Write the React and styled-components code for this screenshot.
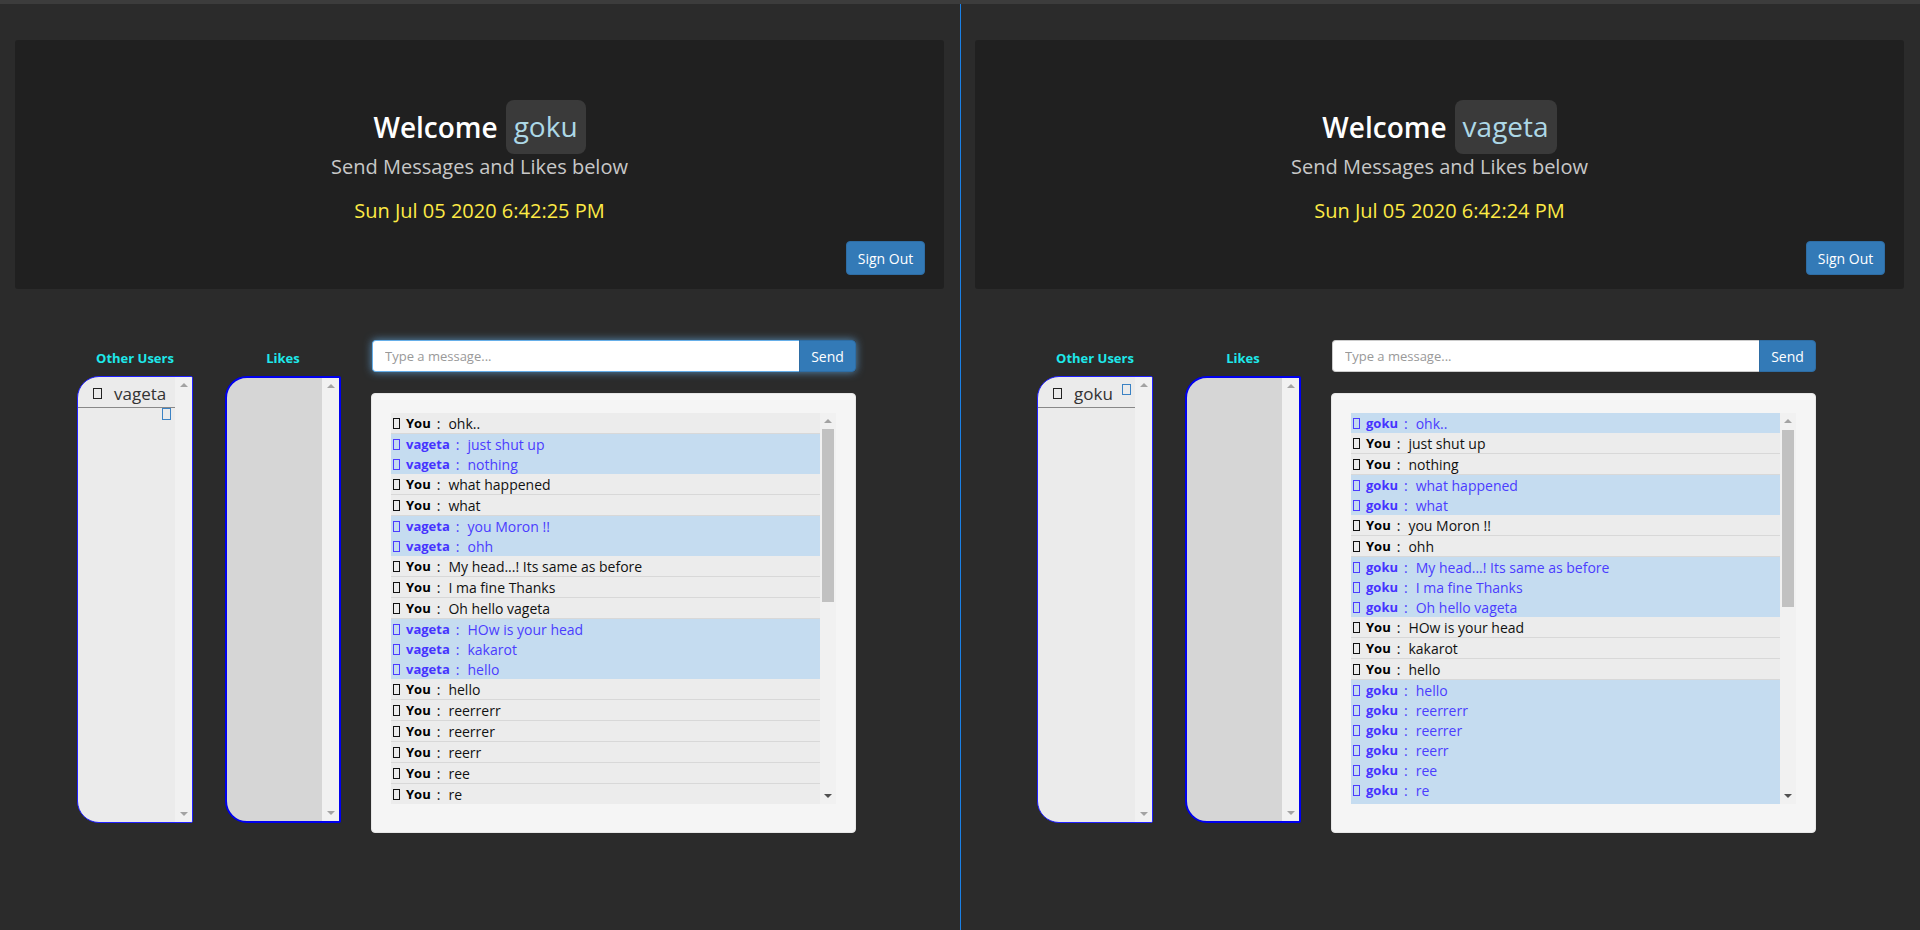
import React from 'react'
import styled, { createGlobalStyle, css } from 'styled-components'

const GlobalStyle = createGlobalStyle`
    html, body {
        margin: 0;
        padding: 0;
        background: #2b2b2b;
    }
    * {
        box-sizing: border-box;
    }
`

const comic = `"Comic Sans MS", "Open Sans", sans-serif`
const segoe = `"Segoe UI", "Open Sans", sans-serif`

const Screen = styled.div`
    display: flex;
    flex-direction: column;
    width: 1920px;
    height: 930px;
    overflow: hidden;
    background: #2b2b2b;
`
const TopBar = styled.div`
    height: 4px;
    background: #3c3c3c;
`
const Panes = styled.div`
    display: flex;
    flex: 1;
`
const Divider = styled.div`
    width: 1px;
    background: #1a80e6;
`
const PaneBox = styled.div`
    width: ${props => props.$width}px;
    display: flex;
    flex-direction: column;
    padding: 36px 16px 0 ${props => props.$left}px;
`

const Header = styled.header`
    height: 249px;
    background: #202020;
    border-radius: 3px;
    display: flex;
    flex-direction: column;
    align-items: center;
    padding-top: 60px;
    font-family: ${comic};
`
const TitleRow = styled.div`
    display: flex;
    align-items: center;
    gap: 8px;
    font-size: 28px;
    font-weight: 600;
    color: #ffffff;
    height: 54px;
`
const NameBadge = styled.span`
    display: inline-block;
    height: 54px;
    line-height: 52px;
    padding: 0 8px;
    border-radius: 8px;
    background: #3a3a3a;
    color: #add8e6;
    font-weight: 400;
`
const Subtitle = styled.div`
    font-size: 20px;
    color: #c8c8c8;
    line-height: 28px;
    margin-top: -1px;
`
const Clock = styled.div`
    font-size: 20px;
    color: #fdea45;
    line-height: 26px;
    margin-top: 17px;
`
const SignOut = styled.button`
    align-self: flex-end;
    margin: 17px 19px 0 0;
    width: 79px;
    height: 34px;
    border: 1px solid #2e6da4;
    border-radius: 4px;
    background: #337ab7;
    color: #fff;
    font-family: ${segoe};
    font-size: 14px;
    padding: 0;
`

const Main = styled.div`
    display: flex;
    align-items: flex-start;
    margin-top: 51px;
    padding-left: 62px;
`
const SideColumn = styled.div`
    width: 116px;
    margin-right: ${props => props.$gap}px;
    display: flex;
    flex-direction: column;
    align-items: center;
`
const SideLabel = styled.div`
    font-family: ${segoe};
    font-size: 13px;
    font-weight: 700;
    color: #1ee8ea;
    height: 16px;
    line-height: 16px;
    margin: 10px 0 10px;
`
const SideBox = styled.div`
    width: 116px;
    height: 447px;
    display: flex;
    border: ${props => props.$thick ? '2px solid #0000ee' : '1px solid #2020ff'};
    border-radius: 22px 2px 2px 22px;
    background: ${props => props.$bg};
    overflow: hidden;
`
const SideContent = styled.div`
    flex: 1;
    display: flex;
    flex-direction: column;
`
const UserRow = styled.div`
    display: flex;
    align-items: center;
    height: 31px;
    padding: 2px 4px 0 15px;
    border-bottom: 1px solid #888;
    font-family: ${segoe};
    font-size: 17px;
    color: #333;
`
const UserName = styled.span`
    margin-left: 12px;
`
const LikeRow = styled.div`
    display: flex;
    justify-content: flex-end;
    padding-right: 4px;
`

const Tofu = styled.span`
    display: inline-block;
    flex: none;
    width: ${props => props.$w || 8}px;
    height: ${props => props.$h || 11}px;
    border: 1px solid ${props => props.$color || '#111'};
    ${props => props.$push && css`margin-left: auto;`}
    ${props => props.$raise && css`align-self: flex-start; margin-top: 5px;`}
`

const Track = styled.div`
    width: ${props => props.$w || 17}px;
    flex: none;
    background: #f1f1f1;
    display: flex;
    flex-direction: column;
    align-items: center;
    padding: 6px 0;
`
const Arrow = styled.span`
    width: 0;
    height: 0;
    border-left: 4px solid transparent;
    border-right: 4px solid transparent;
    ${props => props.$down
        ? css`border-top: 4px solid ${props.$dark ? '#505050' : '#a3a3a3'};`
        : css`border-bottom: 4px solid #a3a3a3;`}
`
const TrackBody = styled.div`
    flex: 1;
    align-self: stretch;
    padding: 0 2px;
`
const Thumb = styled.div`
    background: #c1c1c1;
`

const ChatColumn = styled.div`
    width: 485px;
    display: flex;
    flex-direction: column;
`
const InputGroup = styled.div`
    display: flex;
    height: 32px;
    margin-left: 1px;
    border-radius: 4px;
    ${props => props.$focused && css`box-shadow: 0 0 8px rgba(102, 175, 233, 0.75);`}
`
const MessageInput = styled.input`
    flex: 1;
    height: 32px;
    border: 1px solid ${props => props.$focused ? '#66afe9' : '#ccc'};
    border-right: none;
    border-radius: 4px 0 0 4px;
    padding: 0 12px;
    font-family: ${segoe};
    font-size: 13px;
    color: #555;
    outline: none;
    &::placeholder {
        color: #999;
    }
`
const SendButton = styled.button`
    width: 57px;
    height: 32px;
    border: 1px solid #2e6da4;
    border-radius: 0 4px 4px 0;
    background: #337ab7;
    color: #fff;
    font-family: ${segoe};
    font-size: 14px;
    padding: 0;
`
const Well = styled.div`
    margin-top: 21px;
    height: 440px;
    background: #f5f5f5;
    border: 1px solid #e6e6e6;
    border-radius: 4px;
    padding: 19px 19px 0 19px;
`
const MessageList = styled.div`
    display: flex;
    height: 391px;
    background: #ececec;
`
const Rows = styled.div`
    flex: 1;
    overflow: hidden;
    background: ${props => props.$blueTail ? '#c5dcf0' : '#ececec'};
`
const MessageRow = styled.div`
    display: flex;
    align-items: center;
    height: ${props => props.$blue ? 20 : 21}px;
    padding-left: 2px;
    font-family: ${comic};
    font-size: 14px;
    white-space: nowrap;
    background: ${props => props.$blue ? '#c5dcf0' : '#ececec'};
    color: ${props => props.$blue ? '#4b3cff' : '#111'};
    border-bottom: ${props => props.$blue ? 'none' : '1px solid #d8d8d8'};
`
const Sender = styled.b`
    margin-left: 6px;
    font-size: 13px;
    font-weight: 700;
    color: ${props => props.$blue ? '#4633ff' : '#000'};
`
const Colon = styled.span`
    margin: 0 8px 0 6px;
`

const leftMessages = [
    ['You', 'ohk..'],
    ['vageta', 'just shut up'],
    ['vageta', 'nothing'],
    ['You', 'what happened'],
    ['You', 'what'],
    ['vageta', 'you Moron !!'],
    ['vageta', 'ohh'],
    ['You', 'My head...! Its same as before'],
    ['You', 'I ma fine Thanks'],
    ['You', 'Oh hello vageta'],
    ['vageta', 'HOw is your head'],
    ['vageta', 'kakarot'],
    ['vageta', 'hello'],
    ['You', 'hello'],
    ['You', 'reerrerr'],
    ['You', 'reerrer'],
    ['You', 'reerr'],
    ['You', 'ree'],
    ['You', 're'],
]
const rightMessages = leftMessages.map(([who, text]) => [who === 'You' ? 'goku' : 'You', text])

const Scrollbar = ({ w, thumb, dark }) => (
    <Track $w={w}>
        <Arrow />
        <TrackBody>
            {thumb && <Thumb style={{ marginTop: thumb[0], height: thumb[1] }} />}
        </TrackBody>
        <Arrow $down $dark={dark} />
    </Track>
)

const Pane = ({ user, other, time, focused, iconBelow, messages, thumb, width, left }) => (
    <PaneBox $width={width} $left={left}>
        <Header>
            <TitleRow>
                Welcome <NameBadge>{user}</NameBadge>
            </TitleRow>
            <Subtitle>Send Messages and Likes below</Subtitle>
            <Clock>{time}</Clock>
            <SignOut>Sign Out</SignOut>
        </Header>
        <Main>
            <SideColumn $gap={32}>
                <SideLabel>Other Users</SideLabel>
                <SideBox $bg="#ebebeb">
                    <SideContent>
                        <UserRow>
                            <Tofu $w={9} $h={11} $color="#222" />
                            <UserName>{other}</UserName>
                            {!iconBelow && <Tofu $w={9} $h={11} $color="#3b82c4" $push $raise />}
                        </UserRow>
                        {iconBelow && (
                            <LikeRow>
                                <Tofu $w={9} $h={12} $color="#3b82c4" />
                            </LikeRow>
                        )}
                    </SideContent>
                    <Scrollbar />
                </SideBox>
            </SideColumn>
            <SideColumn $gap={30}>
                <SideLabel>Likes</SideLabel>
                <SideBox $bg="#d6d6d6" $thick>
                    <SideContent />
                    <Scrollbar />
                </SideBox>
            </SideColumn>
            <ChatColumn>
                <InputGroup $focused={focused}>
                    <MessageInput $focused={focused} placeholder="Type a message..." autoFocus={focused} readOnly />
                    <SendButton>Send</SendButton>
                </InputGroup>
                <Well>
                    <MessageList>
                        <Rows $blueTail={messages[messages.length - 1][0] !== 'You'}>
                            {messages.map(([who, text], i) => {
                                const blue = who !== 'You'
                                return (
                                    <MessageRow key={i} $blue={blue}>
                                        <Tofu $w={7} $h={11} $color={blue ? '#4b3cff' : '#111'} />
                                        <Sender $blue={blue}>{who}</Sender>
                                        <Colon>:</Colon>
                                        <span>{text}</span>
                                    </MessageRow>
                                )
                            })}
                        </Rows>
                        <Scrollbar w={16} thumb={thumb} dark />
                    </MessageList>
                </Well>
            </ChatColumn>
        </Main>
    </PaneBox>
)

export default function App() {
    return (
        <Screen>
            <GlobalStyle />
            <TopBar />
            <Panes>
                <Pane
                    width={960}
                    left={15}
                    user="goku"
                    other="vageta"
                    time="Sun Jul 05 2020 6:42:25 PM"
                    focused
                    iconBelow
                    messages={leftMessages}
                    thumb={[6, 173]}
                />
                <Divider />
                <Pane
                    width={959}
                    left={14}
                    user="vageta"
                    other="goku"
                    time="Sun Jul 05 2020 6:42:24 PM"
                    messages={rightMessages}
                    thumb={[7, 177]}
                />
            </Panes>
        </Screen>
    )
}
